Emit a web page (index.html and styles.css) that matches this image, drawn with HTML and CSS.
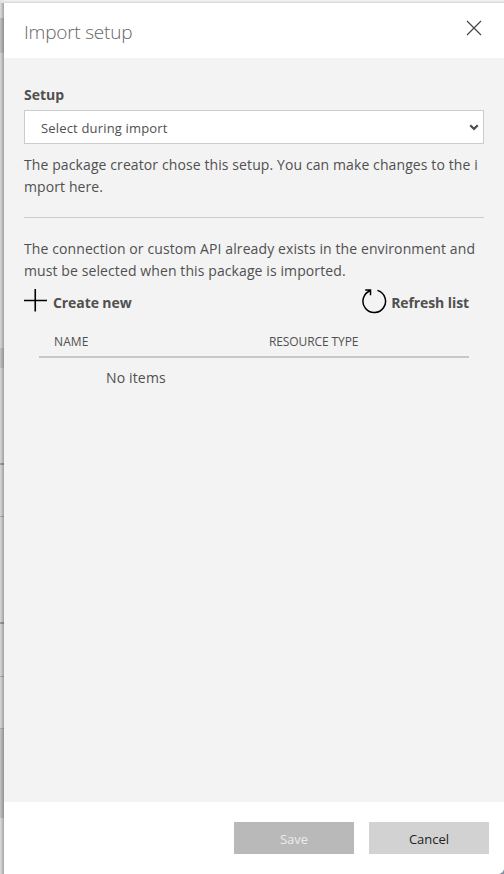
FILE: index.html
```html
<!DOCTYPE html>
<html lang="en">
<head>
<meta charset="utf-8">
<title>Import setup</title>
<link rel="stylesheet" href="styles.css">
</head>
<body>
<div class="page">
<section class="panel">
  <header class="header">
    <h1 class="title">Import setup</h1>
    <svg class="close" width="16" height="16" viewBox="0 0 16 16"><path d="M1 1L15 15M15 1L1 15"/></svg>
  </header>
  <main class="body">
    <label class="label" for="setup">Setup</label>
    <div class="select" id="setup">
      <span class="value">Select during import</span>
      <svg width="10" height="7" viewBox="0 0 10 7"><path d="M1.2 1.2L5 4.9L8.8 1.2"/></svg>
    </div>
    <p class="text">The package creator chose this setup. You can make changes to the i<br>mport here.</p>
    <hr class="rule">
    <p class="text second">The connection or custom API already exists in the environment and<br>must be selected when this package is imported.</p>
    <div class="actions">
      <div class="action">
        <svg class="plus" width="23" height="23" viewBox="0 0 23 23"><path d="M0 11.5H23M11.25 0V22.5"/></svg>
        <span>Create new</span>
      </div>
      <div class="action">
        <svg class="refresh" width="25" height="25" viewBox="0 0 25 25"><path d="M8.2 1.7A11.3 11.3 0 1 0 15.4 1.4M3.2 1H8.5V6.3"/></svg>
        <span>Refresh list</span>
      </div>
    </div>
    <div class="table">
      <div class="head"><span class="name">NAME</span><span class="type">RESOURCE TYPE</span></div>
      <div class="empty">No items</div>
    </div>
  </main>
  <footer class="footer">
    <div class="button save">Save</div>
    <div class="button cancel">Cancel</div>
  </footer>
</section>
<i class="corner"></i>
</div>
</body>
</html>
```
FILE: styles.css
```css
* { box-sizing: border-box; }
body { margin: 0; font-family: "Open Sans", "Noto Sans", sans-serif; color: #505050; }
.page {
  position: relative; height: 874px; padding: 3px 0 0 4px; overflow: hidden;
  background:
    linear-gradient(90deg, rgba(0,0,0,.02), rgba(0,0,0,.09) 1px, rgba(0,0,0,.28) 4px) 0 3px / 4px 871px no-repeat,
    linear-gradient(180deg, #f5f5f5, #d8d8d8) 4px 0 / 500px 3px no-repeat,
    linear-gradient(180deg,
      #e4e4e4 18px, #c7c7c7 18px 53px, #dedede 53px 348px, #c9c9c9 348px 368px,
      #dedede 368px 463px, #a4a4a4 463px 465px, #dedede 465px 516px, #b4b4b4 516px 517px,
      #dedede 517px 622px, #a4a4a4 622px 624px, #dedede 624px 676px, #b4b4b4 676px 677px,
      #dedede 677px 728px, #b4b4b4 728px 729px, #c9c9c9 729px 818px, #e4e4e4 818px);
}
.panel { height: 871px; display: flex; flex-direction: column; background: #fff; }
.header { height: 55px; padding: 0 22px 0 20px; display: flex; justify-content: space-between; }
.title { margin: 15px 0 0; font-size: 19px; line-height: 28px; font-weight: 300; letter-spacing: -.22px; white-space: nowrap; color: #666; }
svg { display: block; fill: none; flex: none; }
.close { margin-top: 17px; stroke: #444; stroke-width: 1.2; }
.body { height: 744px; padding: 25px 20px 0; background: #f3f3f3; }
.label { display: block; height: 27px; font-size: 14px; line-height: 24px; font-weight: 700; }
.select {
  height: 34px; border: 1px solid #ccc; background: #fff; padding: 0 4px 0 16px;
  display: flex; align-items: center; justify-content: space-between; font-size: 13px;
}
.value { padding-top: 2px; letter-spacing: .17px; }
.select svg { stroke: #505050; stroke-width: 2.2; }
.text { margin: 10px 0 0; font-size: 14px; line-height: 22px; letter-spacing: .1px; white-space: nowrap; }
.rule { margin: 19px 0 0; border: 0; height: 1px; background: #ccc; }
.second { margin-top: 20px; }
.actions { display: flex; justify-content: space-between; height: 38px; margin-top: 6px; padding-right: 15px; }
.action { display: flex; font-size: 14px; line-height: 30px; font-weight: 700; letter-spacing: -.09px; white-space: nowrap; }
.plus { margin: 1px 6px 0 0; stroke: #000; stroke-width: 1.6; }
.refresh { margin: 1px 4px 0 0; stroke: #000; stroke-width: 1.5; }
.table { margin: 0 15px; }
.head { display: flex; height: 32px; border-bottom: 2px solid #c8c8c8; font-size: 12px; line-height: 32px; letter-spacing: -.1px; padding-left: 15px; white-space: nowrap; }
.name { width: 215px; letter-spacing: .1px; }
.empty { padding: 8px 0 0 67px; font-size: 14px; line-height: 24px; letter-spacing: .15px; }
.footer { height: 72px; padding: 20px 15px 0; display: flex; justify-content: flex-end; gap: 15px; }
.button { width: 120px; height: 32px; text-align: center; font-size: 13px; line-height: 34px; }
.save { background: #b9b9b9; color: #ececec; }
.cancel { background: #d2d2d2; color: #222; }
.corner { position: absolute; right: 0; bottom: 0; width: 6px; height: 6px; background: radial-gradient(circle at 0 0, transparent 5.5px, #8492a6 6.5px); }
```
